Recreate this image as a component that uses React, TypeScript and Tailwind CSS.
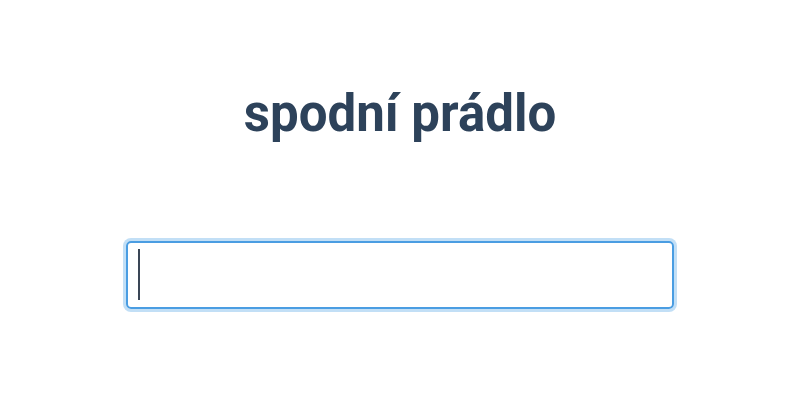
import React from "react";

export default function App() {
  return (
    <div className="w-[800px] h-[400px] bg-white flex flex-col items-center" style={{ fontFamily: "Roboto, 'Liberation Sans', sans-serif" }}>
      <h1 className="mt-[84px] text-[51px] leading-[60px] font-bold text-[#2d425a]">spodní prádlo</h1>
      <div className="relative mt-[97px] w-[548px] h-[68px]">
        <input
          type="text"
          className="w-full h-full rounded-[5px] border-2 border-[#4a9de2] shadow-[0_0_0_3px_#c2dff6] outline-none pl-[11px] text-[44px] text-[#2d425a] caret-transparent"
        />
        <span className="absolute left-[12px] top-[8px] w-[2px] h-[51px] bg-[#3a4656]" />
      </div>
    </div>
  );
}
